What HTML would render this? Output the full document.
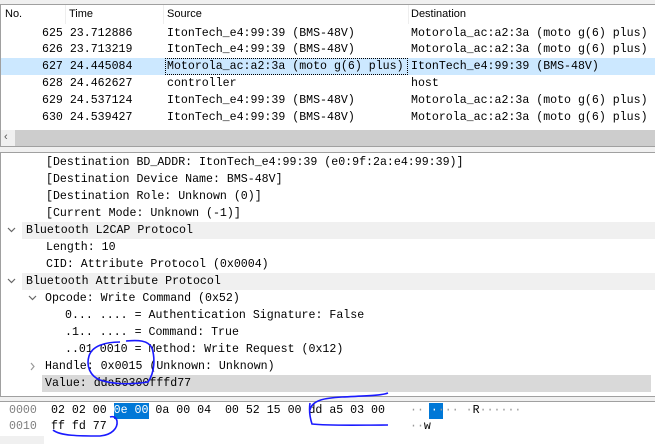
<!DOCTYPE html>
<html><head><style>
body{margin:0;width:655px;height:444px;overflow:hidden;background:#fff;position:relative;font-family:"Liberation Mono",monospace;font-size:11.6px;color:#000}
.a{position:absolute;white-space:pre;line-height:17px}
.s{font-family:"Liberation Sans",sans-serif;font-size:11px}
</style></head><body>
<div style="position:absolute;left:0;top:0;width:655px;height:4px;background:#f0f0f0"></div>
<div style="position:absolute;left:0;top:4px;width:1px;height:144px;background:#a0a0a0"></div>
<div style="position:absolute;left:0;top:4px;width:655px;height:1px;background:#a0a0a0"></div>
<!-- header -->
<div class="a s" style="left:5px;top:6px">No.</div>
<div class="a s" style="left:69px;top:6px">Time</div>
<div class="a s" style="left:167px;top:6px">Source</div>
<div class="a s" style="left:411px;top:6px">Destination</div>
<div style="position:absolute;left:65px;top:5px;width:1px;height:19px;background:#eee"></div>
<div style="position:absolute;left:163px;top:5px;width:1px;height:19px;background:#eee"></div>
<div style="position:absolute;left:408px;top:5px;width:1px;height:19px;background:#eee"></div>
<!-- selected row -->
<div style="position:absolute;left:1px;top:58px;width:654px;height:17px;background:#cce8ff"></div>
<div style="position:absolute;left:165px;top:58px;width:241px;height:15px;border:1px dotted #000"></div>
<div class="a" style="left:42px;top:25px">625 23.712886</div>
<div class="a" style="left:42px;top:41px">626 23.713219</div>
<div class="a" style="left:42px;top:58px">627 24.445084</div>
<div class="a" style="left:42px;top:75px">628 24.462627</div>
<div class="a" style="left:42px;top:92px">629 24.537124</div>
<div class="a" style="left:42px;top:109px">630 24.539427</div>
<div class="a" style="left:167px;top:25px">ItonTech_e4:99:39 (BMS-48V)</div>
<div class="a" style="left:167px;top:41px">ItonTech_e4:99:39 (BMS-48V)</div>
<div class="a" style="left:167px;top:58px">Motorola_ac:a2:3a (moto g(6) plus)</div>
<div class="a" style="left:167px;top:75px">controller</div>
<div class="a" style="left:167px;top:92px">ItonTech_e4:99:39 (BMS-48V)</div>
<div class="a" style="left:167px;top:109px">ItonTech_e4:99:39 (BMS-48V)</div>
<div class="a" style="left:411px;top:25px">Motorola_ac:a2:3a (moto g(6) plus)</div>
<div class="a" style="left:411px;top:41px">Motorola_ac:a2:3a (moto g(6) plus)</div>
<div class="a" style="left:411px;top:58px">ItonTech_e4:99:39 (BMS-48V)</div>
<div class="a" style="left:411px;top:75px">host</div>
<div class="a" style="left:411px;top:92px">Motorola_ac:a2:3a (moto g(6) plus)</div>
<div class="a" style="left:411px;top:109px">Motorola_ac:a2:3a (moto g(6) plus)</div>
<!-- scrollbar -->
<div style="position:absolute;left:1px;top:130px;width:654px;height:16px;background:#cdcdcd"></div>
<div style="position:absolute;left:1px;top:130px;width:14px;height:16px;background:#f0f0f0"></div>
<div class="a s" style="left:4px;top:129px;line-height:16px;color:#555">&lsaquo;</div>
<div style="position:absolute;left:0;top:146px;width:655px;height:1px;background:#a0a0a0"></div>
<div style="position:absolute;left:0;top:147px;width:655px;height:5px;background:#f0f0f0"></div>
<div style="position:absolute;left:0;top:152px;width:655px;height:1px;background:#a0a0a0"></div>
<div style="position:absolute;left:0;top:152px;width:1px;height:244px;background:#a0a0a0"></div>
<!-- details -->
<div style="position:absolute;left:22px;top:222px;width:633px;height:17px;background:#f0f0f0"></div>
<div style="position:absolute;left:22px;top:273px;width:633px;height:17px;background:#f0f0f0"></div>
<div style="position:absolute;left:42px;top:375px;width:609px;height:17px;background:#d9d9d9"></div>
<div class="a" style="left:46px;top:154px">[Destination BD_ADDR: ItonTech_e4:99:39 (e0:9f:2a:e4:99:39)]</div>
<div class="a" style="left:46px;top:171px">[Destination Device Name: BMS-48V]</div>
<div class="a" style="left:46px;top:188px">[Destination Role: Unknown (0)]</div>
<div class="a" style="left:46px;top:205px">[Current Mode: Unknown (-1)]</div>
<div class="a" style="left:26px;top:222px">Bluetooth L2CAP Protocol</div>
<div class="a" style="left:46px;top:239px">Length: 10</div>
<div class="a" style="left:46px;top:256px">CID: Attribute Protocol (0x0004)</div>
<div class="a" style="left:26px;top:273px">Bluetooth Attribute Protocol</div>
<div class="a" style="left:45px;top:290px">Opcode: Write Command (0x52)</div>
<div class="a" style="left:65px;top:307px">0... .... = Authentication Signature: False</div>
<div class="a" style="left:65px;top:324px">.1.. .... = Command: True</div>
<div class="a" style="left:65px;top:341px">..01 0010 = Method: Write Request (0x12)</div>
<div class="a" style="left:45px;top:358px">Handle: 0x0015 (Unknown: Unknown)</div>
<div class="a" style="left:45px;top:375px">Value: dda50300fffd77</div>
<svg style="position:absolute;left:0;top:0" width="655" height="444" fill="none" stroke="#666" stroke-width="1.2">
<path d="M8 228l3.5 3.5 3.5-3.5M8 279l3.5 3.5 3.5-3.5M29 296l3.5 3.5 3.5-3.5"/>
<path d="M31 363l3 3.5-3 3.5" stroke="#999"/>
</svg>
<!-- hex -->
<div style="position:absolute;left:0;top:396px;width:655px;height:1px;background:#a0a0a0"></div>
<div style="position:absolute;left:0;top:397px;width:655px;height:4px;background:#f0f0f0"></div>
<div style="position:absolute;left:0;top:401px;width:655px;height:1px;background:#a0a0a0"></div>
<div style="position:absolute;left:0;top:436px;width:44px;height:8px;background:#f0f0f0"></div>
<div style="position:absolute;left:114px;top:403px;width:35px;height:16px;background:#0078d7"></div>
<div style="position:absolute;left:429px;top:403px;width:14px;height:16px;background:#0078d7"></div>
<div class="a" style="left:9px;top:403px;line-height:16px;color:#808080">0000
0010</div>
<div class="a" style="left:51px;top:403px;line-height:16px">02 02 00 <span style="color:#fff">0e 00</span> 0a 00 04  00 52 15 00 dd a5 03 00
ff fd 77</div>
<div class="a" style="left:410px;top:403px;line-height:16px;color:#999">··<span style="color:#fff">··</span>··· ·<span style="color:#000">R</span>······
··<span style="color:#000">w</span></div>
<!-- pen marks -->
<svg style="position:absolute;left:0;top:0" width="655" height="444" fill="none" stroke="#1a1aff" stroke-width="1.6">
<path d="M120 342C105 342 92 346 89 356C86 366 90 376 100 380C112 384 130 385 148 382C155 372 155 358 152 348C148 340 138 340 126 341"/>
<path d="M310 410C312 400 325 398 342 397C360 396 380 396 388 393"/>
<path d="M310 403C309 410 310 418 312 424C330 426 360 425 388 425"/>
<path d="M53 430C60 436 80 436 100 436C112 435 118 428 117 421C116 417 113 416 110 417"/>
</svg>
</body></html>
